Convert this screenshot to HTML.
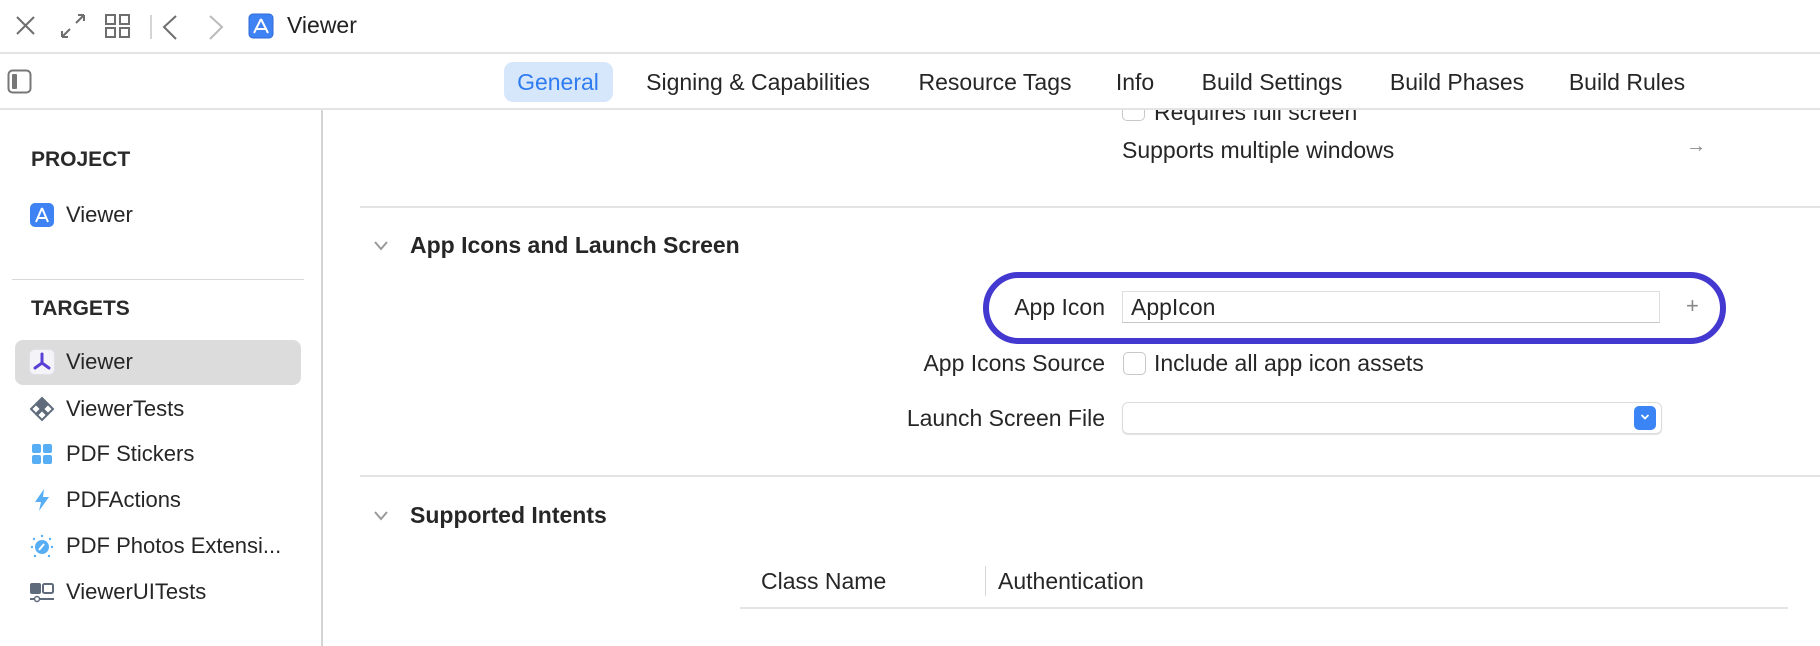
<!DOCTYPE html>
<html><head><meta charset="utf-8"><style>
*{margin:0;padding:0;box-sizing:border-box}
body{width:1820px;height:646px;background:#fff;font-family:"Liberation Sans",sans-serif;color:#262626;position:relative;overflow:hidden;font-size:23px}
.a{position:absolute;white-space:nowrap}
.hl{position:absolute;height:2px;background:#e4e4e4}
.tab{position:absolute;top:69px;font-size:23px;color:#262626;transform:translateX(-50%)}
.row{position:absolute;left:66px;font-size:22px;line-height:26px}
.ic{position:absolute;left:29px;width:26px;height:26px}
.lbl{position:absolute;right:715px;font-size:23px;text-align:right}
</style></head><body>
<!-- top bar -->
<svg class="a" style="left:14px;top:12px" width="350" height="30" viewBox="0 0 350 30">
<g stroke="#6e6e6e" stroke-width="2" fill="none">
<path d="M3 5 L20 22 M20 5 L3 22"/>
<path d="M48 25 L56 17 M48 25 L48 19 M48 25 L54 25 M70 3 L62 11 M70 3 L64 3 M70 3 L70 9"/>
<rect x="92" y="3" width="9" height="9"/><rect x="106" y="3" width="9" height="9"/><rect x="92" y="16" width="9" height="9"/><rect x="106" y="16" width="9" height="9"/>
</g>
<path d="M137 3 L137 27" stroke="#d5d5d5" stroke-width="2"/>
<path d="M162 4 L150 15 L162 27" stroke="#6e6e6e" stroke-width="2" fill="none"/>
<path d="M196 4 L208 15 L196 27" stroke="#bbbbbb" stroke-width="2" fill="none"/>
<rect x="235" y="2" width="24" height="24" rx="4" fill="#3e82f4" stroke="#2f6bd6"/>
<path d="M247 7 L240 21 M247 7 L254 21 M241 17 L253 17" stroke="#fff" stroke-width="2" fill="none"/>
</svg>
<div class="a" style="left:287px;top:12px;font-size:23px;color:#222">Viewer</div>
<div class="hl" style="left:0;top:52px;width:1820px"></div>
<!-- tab bar -->
<svg class="a" style="left:7px;top:69px" width="26" height="26"><rect x="1.5" y="1.5" width="22" height="22" rx="4" fill="none" stroke="#777" stroke-width="2"/><rect x="5" y="5" width="5" height="15" rx="1" fill="#777"/></svg>
<div class="a" style="left:504px;top:62px;width:109px;height:40px;background:#d6e6fb;border-radius:9px"></div>
<div class="tab" style="left:558px;color:#2f7cf0">General</div>
<div class="tab" style="left:758px">Signing &amp; Capabilities</div>
<div class="tab" style="left:995px">Resource Tags</div>
<div class="tab" style="left:1135px">Info</div>
<div class="tab" style="left:1272px">Build Settings</div>
<div class="tab" style="left:1457px">Build Phases</div>
<div class="tab" style="left:1627px">Build Rules</div>
<div class="hl" style="left:0;top:108px;width:1820px"></div>
<!-- sidebar -->
<div class="a" style="left:321px;top:110px;width:2px;height:536px;background:#d4d4d4"></div>
<div class="a" style="left:31px;top:148px;font-size:21px;font-weight:bold;color:#2a2a2a">PROJECT</div>
<svg class="ic" style="top:202px" viewBox="0 0 26 26"><rect x="1" y="1" width="24" height="24" rx="5" fill="#3e82f4"/><path d="M13 6 L7 20 M13 6 L19 20 M8 16 L18 16" stroke="#fff" stroke-width="2" fill="none"/></svg>
<div class="row" style="top:202px">Viewer</div>
<div class="hl" style="left:12px;top:279px;width:292px;height:1px;background:#d8d8d8"></div>
<div class="a" style="left:31px;top:297px;font-size:21px;font-weight:bold;color:#2a2a2a">TARGETS</div>
<div class="a" style="left:15px;top:340px;width:286px;height:45px;background:#dcdcdc;border-radius:8px"></div>
<svg class="ic" style="top:349px" viewBox="0 0 26 26"><rect x="0.5" y="0.5" width="25" height="25" rx="5" fill="#f4f4f8" stroke="#e0e0e8"/><path d="M13 5 L13 14 L6 19 M13 14 L20 19" stroke="#5a3fd6" stroke-width="3" fill="none" stroke-linecap="round"/></svg>
<div class="row" style="top:349px">Viewer</div>
<svg class="ic" style="top:396px" viewBox="0 0 26 26"><g stroke="#5f6b7a" stroke-width="2" fill="none"><path d="M13 2 L18 7 L13 12 L8 7Z" fill="#5f6b7a"/><path d="M7 8 L12 13 L7 18 L2 13Z"/><path d="M19 8 L24 13 L19 18 L14 13Z"/><path d="M13 14 L18 19 L13 24 L8 19Z"/></g></svg>
<div class="row" style="top:396px">ViewerTests</div>
<svg class="ic" style="top:441px" viewBox="0 0 26 26"><g fill="#57aef5"><rect x="3" y="3" width="9" height="9" rx="2"/><rect x="14" y="3" width="9" height="9" rx="2"/><rect x="3" y="14" width="9" height="9" rx="2"/><rect x="14" y="14" width="9" height="9" rx="2"/></g></svg>
<div class="row" style="top:441px">PDF Stickers</div>
<svg class="ic" style="top:487px" viewBox="0 0 26 26"><path d="M15 2 L6 15 L12 15 L10 24 L20 10 L14 10 Z" fill="#57aef5"/></svg>
<div class="row" style="top:487px">PDFActions</div>
<svg class="ic" style="top:533px" viewBox="0 0 26 26"><circle cx="13" cy="14" r="7" fill="#57aef5"/><path d="M10 17 L15 11" stroke="#fff" stroke-width="2"/><g fill="#57aef5"><circle cx="13" cy="3" r="1.2"/><circle cx="3" cy="14" r="1.2"/><circle cx="23" cy="14" r="1.2"/><circle cx="5" cy="6" r="1.2"/><circle cx="21" cy="6" r="1.2"/><circle cx="6" cy="23" r="1.2"/><circle cx="20" cy="23" r="1.2"/></g></svg>
<div class="row" style="top:533px">PDF Photos Extensi...</div>
<svg class="ic" style="top:579px" viewBox="0 0 26 26"><rect x="1" y="4" width="11" height="11" rx="2" fill="#5f6b7a"/><rect x="14" y="5" width="10" height="9" rx="1.5" fill="none" stroke="#5f6b7a" stroke-width="2"/><path d="M1 20 L25 20" stroke="#5f6b7a" stroke-width="2"/><circle cx="8" cy="20" r="2.5" fill="#fff" stroke="#5f6b7a" stroke-width="1.5"/></svg>
<div class="row" style="top:579px">ViewerUITests</div>
<!-- content -->
<div class="a" style="left:1120px;top:110px;width:400px;height:16px;overflow:hidden">
  <div class="a" style="left:2px;top:-12px;width:23px;height:23px;border:1px solid #c8c8c8;border-radius:5px;background:#fff"></div>
  <div class="a" style="left:34px;top:-11px;font-size:23px">Requires full screen</div>
</div>
<div class="a" style="left:1122px;top:137px">Supports multiple windows</div>
<div class="a" style="left:1686px;top:135px;color:#888;font-size:20px">→</div>
<div class="hl" style="left:360px;top:206px;width:1460px"></div>
<svg class="a" style="left:373px;top:240px" width="16" height="12"><path d="M2 2 L8 9 L14 2" stroke="#999" stroke-width="2" fill="none"/></svg>
<div class="a" style="left:410px;top:232px;font-weight:bold;color:#262626">App Icons and Launch Screen</div>
<div class="a" style="left:983px;top:272px;width:743px;height:72px;border:6px solid #4338d0;border-radius:36px"></div>
<div class="lbl" style="top:294px">App Icon</div>
<div class="a" style="left:1122px;top:291px;width:538px;height:32px;border:1px solid #dedede;border-bottom-color:#c6c6c6;background:#fff"></div>
<div class="a" style="left:1131px;top:294px;font-size:23px">AppIcon</div>
<div class="a" style="left:1686px;top:293px;color:#888;font-size:22px">+</div>
<div class="lbl" style="top:350px">App Icons Source</div>
<div class="a" style="left:1123px;top:352px;width:23px;height:23px;border:1px solid #c8c8c8;border-radius:5px;background:#fff"></div>
<div class="a" style="left:1154px;top:350px">Include all app icon assets</div>
<div class="lbl" style="top:405px">Launch Screen File</div>
<div class="a" style="left:1122px;top:402px;width:540px;height:32px;border:1px solid #dcdcdc;border-radius:6px;background:#fff;box-shadow:0 1px 1px rgba(0,0,0,.12)"></div>
<div class="a" style="left:1634px;top:406px;width:22px;height:24px;background:#3a84f5;border-radius:5px"></div>
<svg class="a" style="left:1640px;top:413px" width="10" height="8"><path d="M1.5 2 L5 5.5 L8.5 2" stroke="#fff" stroke-width="1.8" fill="none"/></svg>
<div class="hl" style="left:360px;top:475px;width:1460px"></div>
<svg class="a" style="left:373px;top:510px" width="16" height="12"><path d="M2 2 L8 9 L14 2" stroke="#999" stroke-width="2" fill="none"/></svg>
<div class="a" style="left:410px;top:502px;font-weight:bold">Supported Intents</div>
<div class="a" style="left:761px;top:568px">Class Name</div>
<div class="a" style="left:985px;top:566px;width:1px;height:30px;background:#d6d6d6"></div>
<div class="a" style="left:998px;top:568px">Authentication</div>
<div class="hl" style="left:740px;top:607px;width:1048px"></div>
</body></html>
